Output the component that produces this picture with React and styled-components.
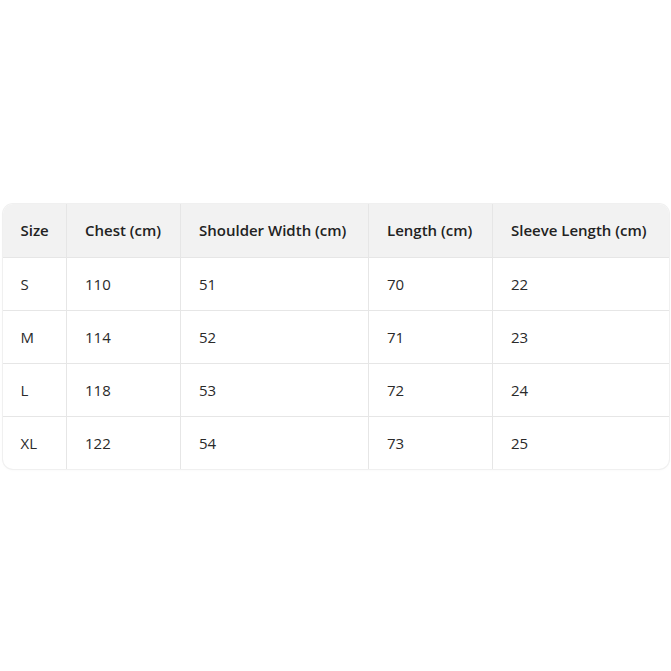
import React from 'react';
import styled, { createGlobalStyle } from 'styled-components';

const Global = createGlobalStyle`
	html, body {
		margin: 0;
		padding: 0;
		background: #ffffff;
	}
	body {
		font-family: "Open Sans", "Noto Sans", sans-serif;
		color: #222222;
	}
`;

const Page = styled.div`
	height: 671px;
	display: flex;
	align-items: center;
	justify-content: center;
	padding-top: 1px;
	box-sizing: border-box;
`;

const Card = styled.div`
	width: 666px;
	border-radius: 10px;
	overflow: hidden;
	box-shadow: 0 0 0 1px #f0f0f0, 0 1px 3px rgba(0, 0, 0, 0.04);
`;

const Table = styled.table`
	width: 100%;
	border-collapse: collapse;
	table-layout: fixed;
	font-size: 15px;
`;

const Head = styled.th`
	height: 53px;
	padding: 0 0 0 18px;
	text-align: left;
	font-weight: 600;
	background: #f2f2f2;
	border-left: ${(p) => (p.$first ? 'none' : '1px solid #e6e6e6')};
	border-bottom: 1px solid #e6e6e6;
	white-space: nowrap;
`;

const Cell = styled.td`
	height: 52px;
	padding: 0 0 0 18px;
	font-weight: 400;
	color: #2a2a2a;
	border-left: ${(p) => (p.$first ? 'none' : '1px solid #e6e6e6')};
	border-bottom: ${(p) => (p.$last ? 'none' : '1px solid #e6e6e6')};
`;

const columns = [
	{ label: 'Size', width: 64 },
	{ label: 'Chest (cm)', width: 114 },
	{ label: 'Shoulder Width (cm)', width: 188 },
	{ label: 'Length (cm)', width: 124 },
	{ label: 'Sleeve Length (cm)', width: 176 },
];

const rows = [
	['S', '110', '51', '70', '22'],
	['M', '114', '52', '71', '23'],
	['L', '118', '53', '72', '24'],
	['XL', '122', '54', '73', '25'],
];

const App = () => (
	<>
		<Global />
		<Page>
			<Card>
				<Table>
					<colgroup>
						{columns.map((c) => (
							<col key={c.label} style={{ width: c.width }} />
						))}
					</colgroup>
					<thead>
						<tr>
							{columns.map((c, i) => (
								<Head key={c.label} $first={i === 0}>
									{c.label}
								</Head>
							))}
						</tr>
					</thead>
					<tbody>
						{rows.map((r, ri) => (
							<tr key={r[0]}>
								{r.map((v, i) => (
									<Cell key={i} $first={i === 0} $last={ri === rows.length - 1}>
										{v}
									</Cell>
								))}
							</tr>
						))}
					</tbody>
				</Table>
			</Card>
		</Page>
	</>
);

export default App;
